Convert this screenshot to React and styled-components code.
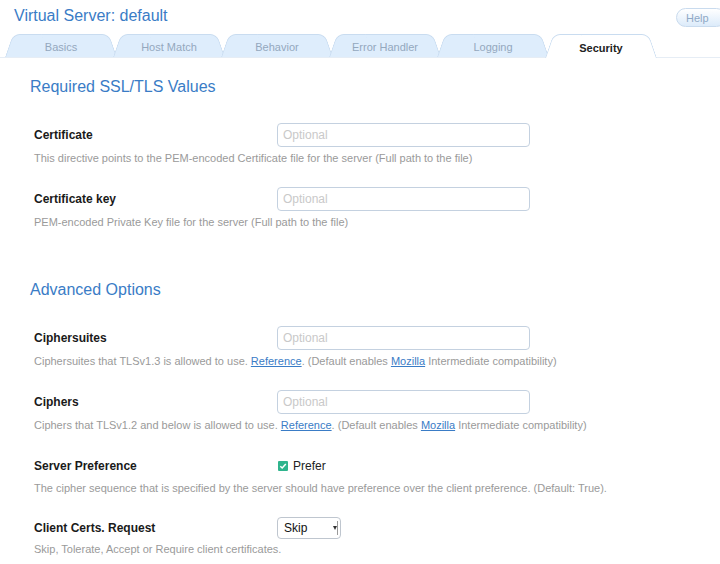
import React from "react";
import styled, { createGlobalStyle } from "styled-components";

const Global = createGlobalStyle`
  html, body { margin: 0; padding: 0; background: #fff; }
  body { font-family: "Liberation Sans", Arial, sans-serif; color: #222; }
  #root { overflow: hidden; width: 720px; height: 564px; }
`;

const Page = styled.div`
  width: 720px;
  height: 564px;
  overflow: hidden;
`;

const Header = styled.div`
  height: 34px;
  display: flex;
  justify-content: space-between;
  align-items: flex-start;
`;

const Title = styled.h1`
  margin: 6px 0 0 14px;
  font-size: 16px;
  line-height: 20px;
  font-weight: normal;
  color: #3a7cc6;
`;

const HelpButton = styled.button`
  margin: 8px -6px 0 0;
  width: 50px;
  height: 19px;
  border: 1px solid #c9dbee;
  border-radius: 10px;
  background: linear-gradient(#ffffff, #dcebfa);
  color: #8fa9c6;
  font-family: "Liberation Sans", Arial, sans-serif;
  font-size: 11px;
  text-align: left;
  padding: 0 0 0 9px;
`;

const TabBar = styled.div`
  display: flex;
  height: 23px;
  border-bottom: 1px solid #e6edf5;
  padding-left: 5px;
`;

const Tab = styled.div`
  position: relative;
  width: 112px;
  height: ${(p) => (p.$active ? "24px" : "23px")};
  margin-left: ${(p) => (p.$first ? "0" : "-4px")};
  display: flex;
  align-items: center;
  justify-content: center;
  padding-top: 3px;
  box-sizing: border-box;
  font-size: 11px;
  color: ${(p) => (p.$active ? "#222" : "#94a8be")};
  font-weight: ${(p) => (p.$active ? "bold" : "normal")};
  z-index: ${(p) => (p.$active ? 3 : 1)};
  &::before,
  &::after {
    content: "";
    position: absolute;
    top: 0;
    bottom: 0;
    width: 60%;
    z-index: -1;
    background: ${(p) => (p.$active ? "#fff" : "#deedfc")};
    border-top: 1px solid #c9dcf0;
    transform-origin: bottom;
  }
  &::before {
    left: 0;
    border-left: 1px solid #c9dcf0;
    border-radius: 7px 0 0 0;
    transform: skewX(-19deg);
  }
  &::after {
    right: 0;
    border-right: 1px solid #c9dcf0;
    border-radius: 0 7px 0 0;
    transform: skewX(19deg);
  }
`;

const Section = styled.section`
  padding-top: ${(p) => p.$top}px;
`;

const SectionTitle = styled.h2`
  margin: 0 0 26px 30px;
  font-size: 16px;
  line-height: 20px;
  font-weight: normal;
  color: #3a7cc6;
`;

const Field = styled.div`
  padding-left: 34px;
  margin-bottom: ${(p) => p.$after || 22}px;
`;

const FieldRow = styled.div`
  display: flex;
  align-items: center;
  height: ${(p) => p.$h || 24}px;
`;

const Label = styled.div`
  width: 243px;
  font-size: 12px;
  font-weight: bold;
  color: #1a1a1a;
`;

const TextInput = styled.input`
  box-sizing: border-box;
  width: 253px;
  height: 24px;
  border: 1px solid #c4d1e0;
  border-radius: 4px;
  padding: 0 5px;
  font-family: "Liberation Sans", Arial, sans-serif;
  font-size: 12px;
  outline: none;
  &::placeholder { color: #c9c9c9; }
`;

const Help = styled.div`
  margin-top: ${(p) => p.$gap ?? 4}px;
  font-size: 11px;
  line-height: 14px;
  color: #9a9a9a;
`;

const Link = styled.a`
  color: #3a7cc6;
  text-decoration: underline;
`;

const CheckLabel = styled.label`
  display: flex;
  align-items: center;
  gap: 5px;
  font-size: 12px;
  color: #222;
  padding-left: 1px;
`;

const CheckBox = styled.span`
  width: 10px;
  height: 10px;
  border-radius: 1px;
  background: #2fb48d;
  display: inline-flex;
  align-items: center;
  justify-content: center;
`;

const SelectBox = styled.div`
  box-sizing: border-box;
  width: 64px;
  height: 22px;
  border: 1px solid #bfc6cf;
  border-radius: 4px;
  display: flex;
  align-items: center;
  justify-content: space-between;
  padding: 0 2px 0 6px;
  font-size: 12px;
  color: #111;
`;

const SelectArrow = styled.span`
  width: 4px;
  height: 14px;
  border-right: 1px solid #9a9a9a;
  display: flex;
  align-items: center;
  justify-content: flex-start;
  &::before {
    content: "";
    border-left: 2.5px solid transparent;
    border-right: 2.5px solid transparent;
    border-top: 4px solid #333;
  }
`;

const tabs = ["Basics", "Host Match", "Behavior", "Error Handler", "Logging", "Security"];

function TextField({ label, after, children }) {
  return (
    <Field $after={after}>
      <FieldRow>
        <Label>{label}</Label>
        <TextInput placeholder="Optional" />
      </FieldRow>
      <Help>{children}</Help>
    </Field>
  );
}

export default function App() {
  return (
    <Page>
      <Global />
      <Header>
        <Title>Virtual Server: default</Title>
        <HelpButton>Help</HelpButton>
      </Header>
      <TabBar>
        {tabs.map((t, i) => (
          <Tab key={t} $first={i === 0} $active={t === "Security"}>
            {t}
          </Tab>
        ))}
      </TabBar>
      <Section $top={19}>
        <SectionTitle>Required SSL/TLS Values</SectionTitle>
        <TextField label="Certificate">
          This directive points to the PEM-encoded Certificate file for the server (Full path to the file)
        </TextField>
        <TextField label="Certificate key">
          PEM-encoded Private Key file for the server (Full path to the file)
        </TextField>
      </Section>
      <Section $top={29}>
        <SectionTitle>Advanced Options</SectionTitle>
        <TextField label="Ciphersuites">
          Ciphersuites that TLSv1.3 is allowed to use. <Link>Reference</Link>. (Default enables{" "}
          <Link>Mozilla</Link> Intermediate compatibility)
        </TextField>
        <TextField label="Ciphers" after={23}>
          Ciphers that TLSv1.2 and below is allowed to use. <Link>Reference</Link>. (Default enables{" "}
          <Link>Mozilla</Link> Intermediate compatibility)
        </TextField>
        <Field>
          <FieldRow $h={22}>
            <Label>Server Preference</Label>
            <CheckLabel>
              <CheckBox>
                <svg width="8" height="8" viewBox="0 0 8 8">
                  <path d="M1.3 4.2 L3.2 6 L6.8 2" fill="none" stroke="#fff" strokeWidth="1.5" />
                </svg>
              </CheckBox>
              Prefer
            </CheckLabel>
          </FieldRow>
          <Help>
            The cipher sequence that is specified by the server should have preference over the client preference. (Default: True).
          </Help>
        </Field>
        <Field>
          <FieldRow $h={22}>
            <Label>Client Certs. Request</Label>
            <SelectBox>
              Skip
              <SelectArrow />
            </SelectBox>
          </FieldRow>
          <Help $gap={3}>Skip, Tolerate, Accept or Require client certificates.</Help>
        </Field>
      </Section>
    </Page>
  );
}
